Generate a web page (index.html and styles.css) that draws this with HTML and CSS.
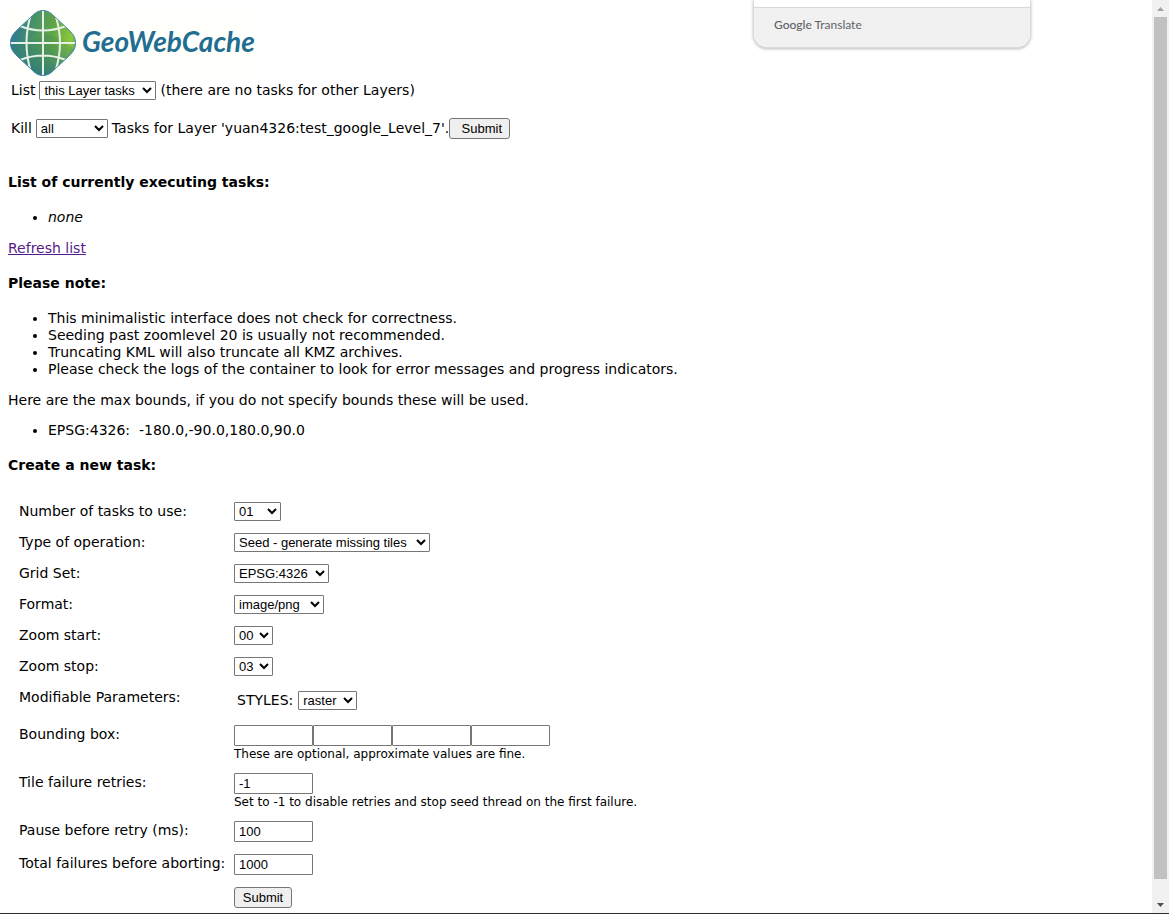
FILE: index.html
```html
<!DOCTYPE html>
<html lang="en">
<head>
<meta charset="utf-8">
<title>GeoWebCache</title>
<link rel="stylesheet" href="styles.css">
</head>
<body>
<div class="window">
  <div class="viewport">
    <main class="page">
      <a class="logo" href="#" aria-label="GeoWebCache">
        <svg class="globe" viewBox="0 0 70 70" aria-hidden="true">
          <defs>
            <linearGradient id="sea" x1="0" y1="0.4" x2="1" y2="0.6">
              <stop offset="0" stop-color="#2a759d"/>
              <stop offset="0.3" stop-color="#46906a"/>
              <stop offset="0.62" stop-color="#64a744"/>
              <stop offset="0.88" stop-color="#8cc83c"/>
              <stop offset="1" stop-color="#5a9a70"/>
            </linearGradient>
            <linearGradient id="shade" x1="0.5" y1="0" x2="0.4" y2="1">
              <stop offset="0.5" stop-color="#2c7d7c" stop-opacity="0"/>
              <stop offset="1" stop-color="#246f94" stop-opacity="0.9"/>
            </linearGradient>
            <clipPath id="diamond"><path d="M35 2.500C40 2.500 43 5 47 9L61 22C66 27 67.500 30 67.500 35S66 43 61 48L47 61C43 65 40 67.500 35 67.500S27 65 23 61L9 48C4 43 2.500 40 2.500 35S4 27 9 22L23 9C27 5 30 2.500 35 2.500Z"/></clipPath>
          </defs>
          <g clip-path="url(#diamond)">
            <path fill="url(#sea)" d="M0 0H70V70H0Z"/>
            <path fill="url(#shade)" d="M0 0H70V70H0Z"/>
            <path fill="#377f63" opacity=".25" d="M0 35Q26 34 40 27Q54 29 70 45V70H0Z"/>
            <path fill="none" stroke="#e5f1e6" stroke-width="2" d="M35 0V70M0 35H70M12 18Q35 27 58 18M12 52Q35 43 58 52M23 6Q14 35 23 64M47 6Q57 35 47 64"/>
          </g>
          <path fill="none" stroke="#4a8ab0" stroke-width="1" d="M35 2.500C40 2.500 43 5 47 9L61 22C66 27 67.500 30 67.500 35S66 43 61 48L47 61C43 65 40 67.500 35 67.500S27 65 23 61L9 48C4 43 2.500 40 2.500 35S4 27 9 22L23 9C27 5 30 2.500 35 2.500Z"/>
        </svg>
        <span class="brand">GeoWebCache</span>
      </a>

      <form class="bar">
        <label for="list">List</label>
        <select id="list" class="w-list"><option>this Layer tasks</option></select>
        <span>(there are no tasks for other Layers)</span>
      </form>
      <form class="bar kill">
        <label for="kill">Kill</label>
        <select id="kill" class="w-kill"><option>all</option></select>
        <span class="target">Tasks for Layer 'yuan4326:test_google_Level_7'.<button type="button" class="wide">Submit</button></span>
      </form>

      <h4 class="first">List of currently executing tasks:</h4>
      <ul><li><i>none</i></li></ul>
      <p><a class="refresh" href="#">Refresh list</a></p>

      <h4>Please note:</h4>
      <ul>
        <li>This minimalistic interface does not check for correctness.</li>
        <li>Seeding past zoomlevel 20 is usually not recommended.</li>
        <li>Truncating KML will also truncate all KMZ archives.</li>
        <li>Please check the logs of the container to look for error messages and progress indicators.</li>
      </ul>
      <p>Here are the max bounds, if you do not specify bounds these will be used.</p>
      <ul class="bounds"><li>EPSG:4326: &nbsp;-180.0,-90.0,180.0,90.0</li></ul>

      <h4>Create a new task:</h4>
      <form class="task">
        <label for="threads">Number of tasks to use:</label>
        <div><select id="threads" class="w-threads"><option>01</option></select></div>
        <label for="type">Type of operation:</label>
        <div><select id="type" class="w-type"><option>Seed - generate missing tiles</option></select></div>
        <label for="grid">Grid Set:</label>
        <div><select id="grid" class="w-grid"><option>EPSG:4326</option></select></div>
        <label for="format">Format:</label>
        <div><select id="format" class="w-format"><option>image/png</option></select></div>
        <label for="start">Zoom start:</label>
        <div><select id="start" class="w-zoom"><option>00</option></select></div>
        <label for="stop">Zoom stop:</label>
        <div><select id="stop" class="w-zoom"><option>03</option></select></div>
        <span>Modifiable Parameters:</span>
        <div class="params"><label for="styles">STYLES:</label><select id="styles" class="w-styles"><option>raster</option></select></div>
        <label for="minx">Bounding box:</label>
        <div>
          <div class="bbox"><input id="minx" type="text"><input type="text" aria-label="Min Y"><input type="text" aria-label="Max X"><input type="text" aria-label="Max Y"></div>
          <small>These are optional, approximate values are fine.</small>
        </div>
        <label for="retries">Tile failure retries:</label>
        <div>
          <input id="retries" type="text" value="-1">
          <small>Set to -1 to disable retries and stop seed thread on the first failure.</small>
        </div>
        <label for="pause">Pause before retry (ms):</label>
        <div><input id="pause" type="text" value="100"></div>
        <label for="total">Total failures before aborting:</label>
        <div><input id="total" type="text" value="1000"></div>
        <button type="button" class="send">Submit</button>
      </form>
    </main>
    <div class="scrollbar" aria-hidden="true">
      <svg class="arrow" viewBox="0 0 17 17"><path fill="#a3a3a3" d="M5 11L8.500 7L12 11Z"/></svg>
      <div class="thumb"></div>
      <svg class="arrow" viewBox="0 0 17 17"><path fill="#505050" d="M5 7H12L8.500 11Z"/></svg>
    </div>
  </div>
  <div class="edge"></div>
</div>
<aside class="translate"><div class="credit"><b>Google</b> Translate</div></aside>
</body>
</html>
```
FILE: styles.css
```css
* { box-sizing: border-box; }
body {
  margin: 0;
  background: #fff;
  color: #000;
  font: 14px/17px Verdana, "DejaVu Sans", sans-serif;
}
.window { display: flex; flex-direction: column; height: 100vh; }
.viewport { display: flex; flex: 1; min-height: 0; }
.page { flex: 1; min-width: 0; padding: 8px; overflow: hidden; }
.edge { height: 1px; background: #302c2a; }

.logo { display: flex; align-items: center; width: max-content; height: 70px; background: #fffffb; text-decoration: none; }
.globe { width: 70px; height: 70px; }
.brand { padding: 0 0 4px 4px; color: #226e92; font: italic 700 28px/34px Lato, sans-serif; }

.bar { display: flex; align-items: center; gap: 4px; height: 21px; margin: 2px 0 0 3px; }
.kill { margin-top: 17px; }
.target { display: flex; align-items: center; }

h4 { margin: 18px 0; font-size: 14px; line-height: 17px; }
.first { margin-top: 35px; }
ul { margin: 14px 0; padding-left: 40px; }
p { margin: 14px 0; }
p + .bounds { margin-top: -1px; }
p:has(+ .bounds) { margin-bottom: 14px; }
.refresh { color: #551a8b; }

select, input, button { margin: 0; border: 1px solid #767676; color: #000; font: 13px "Liberation Sans", Arial, sans-serif; }
select { height: 19px; border-radius: 1px; background: #fff; }
input { display: block; width: 79px; height: 21px; padding: 1px 4px; border-radius: 1px; background: #fff; }
button { height: 21px; padding: 1px 6px; border-radius: 3px; background: #efefef; }
.wide { width: 61px; padding-left: 10px; }
.w-list { width: 117px; }
.w-kill { width: 72px; }
.w-threads { width: 47px; }
.w-type { width: 196px; }
.w-grid { width: 95px; }
.w-format { width: 90px; }
.w-zoom { width: 39px; }
.w-styles { width: 59px; }

.task { display: grid; grid-template-columns: 203px 1fr; gap: 12px; margin: 28px 0 0 11px; }
.task > label, .task > span { padding-top: 1px; white-space: nowrap; }
.task > div { display: flex; flex-direction: column; align-items: flex-start; }
.task > .params { flex-direction: row; align-items: center; gap: 5px; padding: 3px; }
.bbox { display: flex; }
small { padding-top: 1px; font-size: 12px; line-height: 14px; }
.send { grid-column: 2; justify-self: start; width: 58px; }

.scrollbar { display: flex; flex-direction: column; width: 17px; background: #f1f1f1; }
.arrow { flex: none; width: 17px; height: 17px; }
.thumb { flex: 1; margin: 0 2px 17px; background: #c1c1c1; }

.translate {
  position: absolute;
  top: 0;
  right: 138px;
  width: 278px;
  padding-top: 7px;
  overflow: hidden;
  border: 1px solid #dadada;
  border-top: 0;
  border-radius: 0 0 14px 14px;
  background: #fff;
  box-shadow: 0 1px 3px #bbb;
}
.credit { height: 40px; padding: 9px 20px; border-top: 1px solid #d8d8d8; background: #f1f1f1; color: #5f6368; font: 12px/16px Lato, sans-serif; }
.credit b { font-weight: 500; }
```
